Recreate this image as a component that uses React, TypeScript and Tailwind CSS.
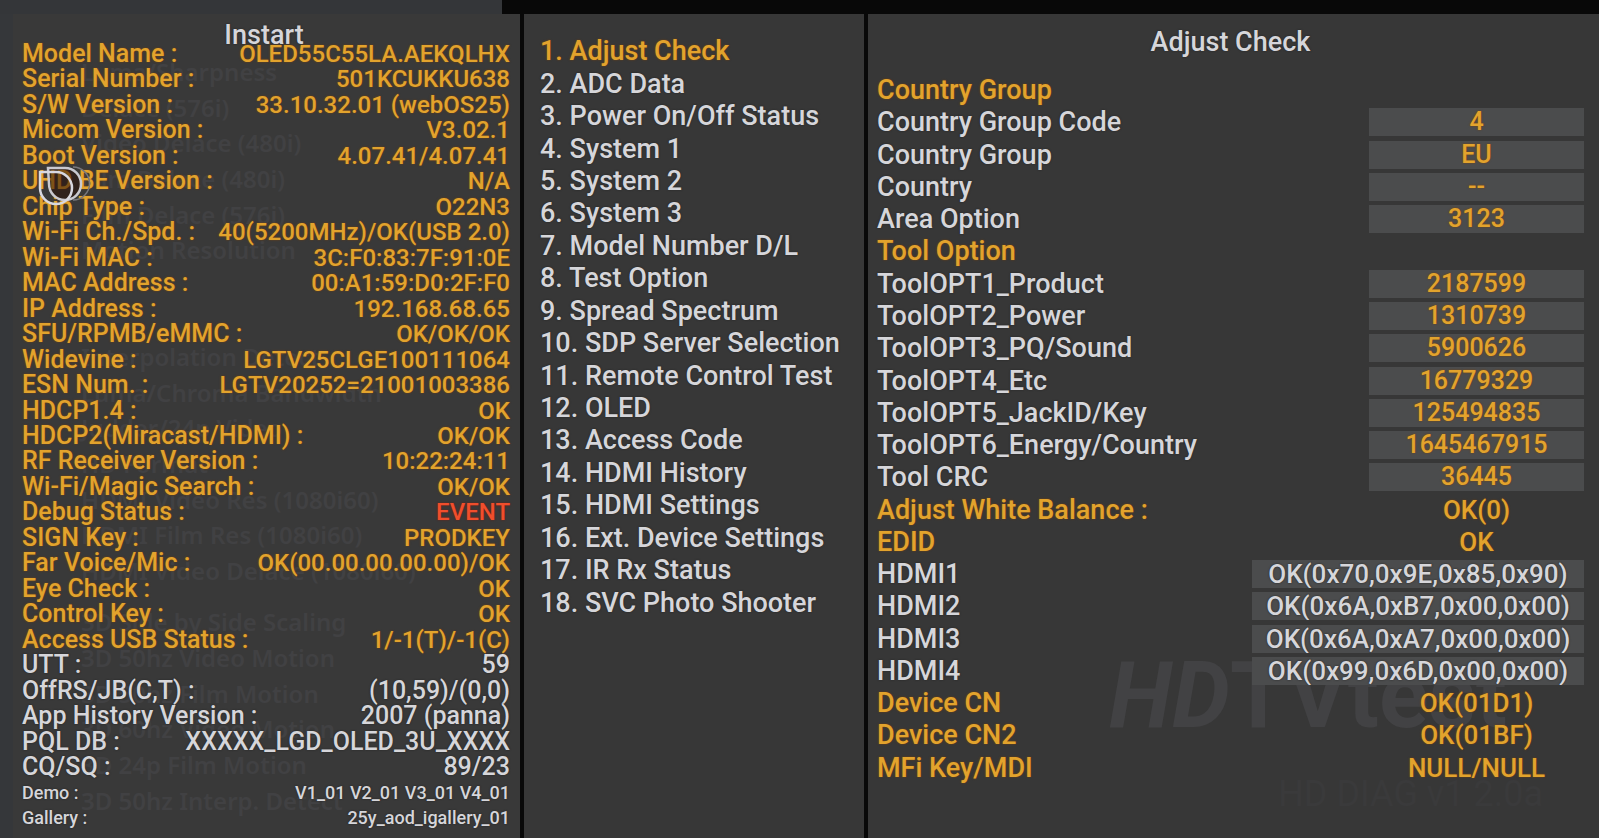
import React from 'react';
import clsx from 'clsx';

type Tone = 'amber' | 'white' | 'red';

interface InfoRow {
  label: string;
  value: string;
  tone?: Tone;
  valueTone?: Tone;
  small?: boolean;
}

interface CheckRow {
  label: string;
  value?: string;
  tone: Tone;
  valueTone?: Tone;
  field?: 'narrow' | 'wide';
}

const toneClass: Record<Tone, string> = {
  amber: 'text-[#e2a32d] [text-shadow:0_0_2px_#7a4208]',
  white: 'text-[#d6d6da] [text-shadow:0_0_2px_#222222]',
  red: 'text-[#f04e2c] [text-shadow:0_0_2px_#7a1c0c]',
};

const infoRows: InfoRow[] = [
  { label: 'Model Name', value: 'OLED55C55LA.AEKQLHX' },
  { label: 'Serial Number', value: '501KCUKKU638' },
  { label: 'S/W Version', value: '33.10.32.01 (webOS25)' },
  { label: 'Micom Version', value: 'V3.02.1' },
  { label: 'Boot Version', value: '4.07.41/4.07.41' },
  { label: 'UHD BE Version', value: 'N/A' },
  { label: 'Chip Type', value: 'O22N3' },
  { label: 'Wi-Fi Ch./Spd.', value: '40(5200MHz)/OK(USB 2.0)' },
  { label: 'Wi-Fi MAC', value: '3C:F0:83:7F:91:0E' },
  { label: 'MAC Address', value: '00:A1:59:D0:2F:F0' },
  { label: 'IP Address', value: '192.168.68.65' },
  { label: 'SFU/RPMB/eMMC', value: 'OK/OK/OK' },
  { label: 'Widevine', value: 'LGTV25CLGE100111064' },
  { label: 'ESN Num.', value: 'LGTV20252=21001003386' },
  { label: 'HDCP1.4', value: 'OK' },
  { label: 'HDCP2(Miracast/HDMI)', value: 'OK/OK' },
  { label: 'RF Receiver Version', value: '10:22:24:11' },
  { label: 'Wi-Fi/Magic Search', value: 'OK/OK' },
  { label: 'Debug Status', value: 'EVENT', valueTone: 'red' },
  { label: 'SIGN Key', value: 'PRODKEY' },
  { label: 'Far Voice/Mic', value: 'OK(00.00.00.00.00)/OK' },
  { label: 'Eye Check', value: 'OK' },
  { label: 'Control Key', value: 'OK' },
  { label: 'Access USB Status', value: '1/-1(T)/-1(C)' },
  { label: 'UTT', value: '59', tone: 'white' },
  { label: 'OffRS/JB(C,T)', value: '(10,59)/(0,0)', tone: 'white' },
  { label: 'App History Version', value: '2007 (panna)', tone: 'white' },
  { label: 'PQL DB', value: 'XXXXX_LGD_OLED_3U_XXXX', tone: 'white' },
  { label: 'CQ/SQ', value: '89/23', tone: 'white' },
  { label: 'Demo', value: 'V1_01 V2_01 V3_01 V4_01', tone: 'white', small: true },
  { label: 'Gallery', value: '25y_aod_igallery_01', tone: 'white', small: true },
];

const menuItems = [
  'Adjust Check',
  'ADC Data',
  'Power On/Off Status',
  'System 1',
  'System 2',
  'System 3',
  'Model Number D/L',
  'Test Option',
  'Spread Spectrum',
  'SDP Server Selection',
  'Remote Control Test',
  'OLED',
  'Access Code',
  'HDMI History',
  'HDMI Settings',
  'Ext. Device Settings',
  'IR Rx Status',
  'SVC Photo Shooter',
];

const checkRows: CheckRow[] = [
  { label: 'Country Group', tone: 'amber' },
  { label: 'Country Group Code', value: '4', tone: 'white', field: 'narrow' },
  { label: 'Country Group', value: 'EU', tone: 'white', field: 'narrow' },
  { label: 'Country', value: '--', tone: 'white', field: 'narrow' },
  { label: 'Area Option', value: '3123', tone: 'white', field: 'narrow' },
  { label: 'Tool Option', tone: 'amber' },
  { label: 'ToolOPT1_Product', value: '2187599', tone: 'white', field: 'narrow' },
  { label: 'ToolOPT2_Power', value: '1310739', tone: 'white', field: 'narrow' },
  { label: 'ToolOPT3_PQ/Sound', value: '5900626', tone: 'white', field: 'narrow' },
  { label: 'ToolOPT4_Etc', value: '16779329', tone: 'white', field: 'narrow' },
  { label: 'ToolOPT5_JackID/Key', value: '125494835', tone: 'white', field: 'narrow' },
  { label: 'ToolOPT6_Energy/Country', value: '1645467915', tone: 'white', field: 'narrow' },
  { label: 'Tool CRC', value: '36445', tone: 'white', field: 'narrow' },
  { label: 'Adjust White Balance :', value: 'OK(0)', tone: 'amber' },
  { label: 'EDID', value: 'OK', tone: 'amber' },
  { label: 'HDMI1', value: 'OK(0x70,0x9E,0x85,0x90)', tone: 'white', valueTone: 'white', field: 'wide' },
  { label: 'HDMI2', value: 'OK(0x6A,0xB7,0x00,0x00)', tone: 'white', valueTone: 'white', field: 'wide' },
  { label: 'HDMI3', value: 'OK(0x6A,0xA7,0x00,0x00)', tone: 'white', valueTone: 'white', field: 'wide' },
  { label: 'HDMI4', value: 'OK(0x99,0x6D,0x00,0x00)', tone: 'white', valueTone: 'white', field: 'wide' },
  { label: 'Device CN', value: 'OK(01D1)', tone: 'amber' },
  { label: 'Device CN2', value: 'OK(01BF)', tone: 'amber' },
  { label: 'MFi Key/MDI', value: 'NULL/NULL', tone: 'amber' },
];

// Menu behind the overlay, barely visible through it
const ghostUpper = [
  'Luma/Sharpness',
  'Delace (576i)',
  'Video Delace (480i)',
  'Film Delace (480i)',
  'Film Delace (576i)',
  'Motion Resolution',
  '',
  '',
  'Interpolation Detect',
  'Luma/Chroma Bandwidth',
  'Judder/24p Video',
  'HD Format',
  'HDMI Video Res (1080i60)',
  'HDMI Film Res (1080i60)',
  'HDMI Video Delace (1080i60)',
];

const ghostLower = [
  '3D Side by Side Scaling',
  '3D 50hz Video Motion',
  '3D 50hz Film Motion',
  '3D 60hz Video Motion',
  '3D 24p Film Motion',
  '3D 50hz Interp. Detect',
];

const GhostMenu: React.FC = () => (
  <div
    aria-hidden="true"
    className="pointer-events-none absolute inset-0 flex flex-col overflow-hidden pb-5 pl-[68px] pt-10 font-['Noto_Sans',sans-serif] text-2xl font-semibold text-[#414143]"
  >
    {ghostUpper.map((line, i) => (
      <div key={i} className="min-h-0 flex-1 leading-9">{line}</div>
    ))}
    <div className="h-4 shrink-0" />
    {ghostLower.map((line) => (
      <div key={line} className="min-h-0 flex-1 leading-9">{line}</div>
    ))}
  </div>
);

const Cursor: React.FC = () => (
  <svg
    aria-hidden="true"
    viewBox="0 0 56 44"
    className="absolute left-6 top-[151px] h-11 w-14"
    fill="none"
  >
    <path d="M11 3H28A16 16 0 1 1 12 19Z" fill="#2a1008" fillOpacity="0.55" />
    <path d="M36 2A16.500 16.500 0 1 1 36 35" stroke="#77777c" strokeWidth="1.5" />
    <path d="M11 3H28A16 16 0 1 1 12 19Z" stroke="#c9c9d0" strokeWidth="2.5" />
    <path d="M3 7H19A16 16 0 1 1 3 23Z" stroke="#d8d8e0" strokeWidth="2.5" />
  </svg>
);

const InstartPanel: React.FC = () => (
  <section className="relative flex flex-col border-l-[13px] border-[#35373a] bg-[#393939] pb-[7px] pl-[9px] pr-2.5 pt-[13px]">
    <GhostMenu />
    <h2 className={clsx('relative mr-1 h-3.5 text-center text-[27px] leading-4', toneClass.white)}>
      Instart
    </h2>
    <dl className="relative flex flex-1 flex-col">
      {infoRows.map((row) => (
        <div
          key={row.label}
          className={clsx(
            'flex min-h-6 flex-1 items-center justify-between whitespace-nowrap leading-6',
            row.small ? 'text-lg' : 'text-[25px]',
            toneClass[row.tone ?? 'amber']
          )}
        >
          <dt>{row.label} :</dt>
          <dd
            className={clsx(
              !row.tone && 'text-2xl leading-6',
              toneClass[row.valueTone ?? row.tone ?? 'amber']
            )}
          >
            {row.value}
          </dd>
        </div>
      ))}
    </dl>
    <Cursor />
  </section>
);

const MenuPanel: React.FC = () => (
  <nav className="bg-[#373737] pb-[219px] pl-4 pt-[21px]">
    <ol className="flex h-full flex-col">
      {menuItems.map((item, i) => (
        <li key={item} className="flex min-h-8 flex-1 items-center">
          <button
            type="button"
            className={clsx(
              'whitespace-nowrap text-left text-[27px] leading-8',
              toneClass[i === 0 ? 'amber' : 'white']
            )}
          >
            {i + 1}. {item}
          </button>
        </li>
      ))}
    </ol>
  </nav>
);

const CheckPanel: React.FC = () => (
  <section className="relative flex flex-col bg-[#373737] pb-[54px] pl-[9px] pr-[15px] pt-3">
    <div
      aria-hidden="true"
      className="pointer-events-none absolute bottom-24 right-[92px] text-[92px] font-bold leading-none text-[#424244]"
    >
      <span className="italic">HD</span>TVtest
    </div>
    <div
      aria-hidden="true"
      className="pointer-events-none absolute bottom-6 right-14 text-4xl font-normal text-[#3a3a3b]"
    >
      HD DIAG v1 2.0a
    </div>
    <h2 className={clsx('relative h-12 text-center text-[27px] leading-8', toneClass.white)}>
      Adjust Check
    </h2>
    <div className="relative flex flex-1 flex-col">
      {checkRows.map((row, i) => (
        <div
          key={i}
          className="flex min-h-8 flex-1 items-center justify-between whitespace-nowrap text-[27px] leading-7"
        >
          {row.field ? (
            <>
              <label htmlFor={`check-${i}`} className={toneClass[row.tone]}>{row.label}</label>
              <input
                id={`check-${i}`}
                type="text"
                defaultValue={row.value}
                className={clsx(
                  'h-7 bg-[#4b4c4d] text-center outline-none',
                  row.field === 'wide' ? 'w-[332px] text-[26px]' : 'w-[215px] text-[25px]',
                  toneClass[row.valueTone ?? 'amber']
                )}
              />
            </>
          ) : (
            <>
              <span className={toneClass[row.tone]}>{row.label}</span>
              {row.value && (
                <span className={clsx('w-[215px] text-center text-[26px]', toneClass[row.tone])}>
                  {row.value}
                </span>
              )}
            </>
          )}
        </div>
      ))}
    </div>
  </section>
);

const App: React.FC = () => {
  return (
    <div className="flex min-h-screen flex-col bg-[#080808] font-[Roboto,sans-serif] font-medium">
      <div className="h-3.5 w-[31.4%] bg-[#343639]" />
      <main className="grid flex-1 grid-cols-[520fr_340fr_731fr] gap-1">
        <InstartPanel />
        <MenuPanel />
        <CheckPanel />
      </main>
    </div>
  );
};

export default App;
